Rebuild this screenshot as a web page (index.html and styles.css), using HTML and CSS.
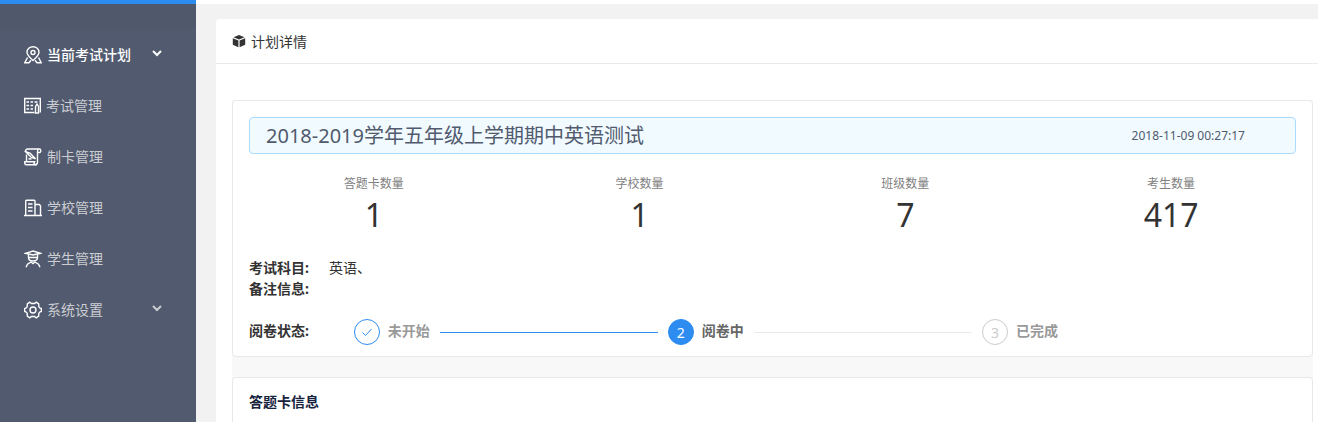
FILE: index.html
```html
<!DOCTYPE html>
<html lang="zh-CN">
<head>
    <meta charset="UTF-8">
    <meta name="viewport" content="width=device-width, initial-scale=1.0">
    <title>计划详情</title>
    <link rel="stylesheet" href="styles.css">
</head>
<body>

    <!-- ======= Sidebar ======= -->
    <aside class="sidebar">
        <nav class="menu">
            <a class="menu-item active" href="#plan">
                <svg class="menu-icon" viewBox="0 0 18 18">
                    <path d="M9 14.500C5 11 3 9 3 6.300a6 5.600 0 0 1 12 0c0 2.700-2 4.700-6 8.200z"/>
                    <circle cx="9" cy="6.500" r="2"/>
                    <path d="M3.500 11.500L.8 16.800H5l2-2.500M14.500 11.500l2.700 5.300H13l-2-2.500"/>
                </svg>
                <span>当前考试计划</span>
                <svg class="arrow" viewBox="0 0 10 10"><path d="M1 3l4 4 4-4"/></svg>
            </a>
            <a class="menu-item" href="#exam">
                <svg class="menu-icon narrow" viewBox="0 0 17 18">
                    <path d="M10.500 15.500H.7v-14h15.600v14"/>
                    <path d="M2.500 5h2.500M6.500 5h2.500M10.500 5h3M2.500 8.500h2.500M6.500 8.500h2.500M2.500 12h2.500M6.500 12h2.500"/>
                    <path d="M11.500 16V9.500l1.500-2.500 1.500 2.500V16z"/>
                </svg>
                <span>考试管理</span>
            </a>
            <a class="menu-item" href="#card">
                <svg class="menu-icon" viewBox="0 0 18 18">
                    <path d="M2.500 4C1 3.500 1.500 1 3.500 1h11.800c2 0 2 3.500.2 3.500h-2M14.500 1.200c-1 .6-1 1.800-1 3V14c0 1.800-1 2.700-2.500 2.700"/>
                    <path d="M2.500 6.500v7M.8 13.800h9.700c-.6 1-.5 2.200.5 2.900H2C.8 16.700.6 15 .8 13.800z"/>
                    <path d="M2 4l4 1.200 5.500 5.600-4.500-1.600zM4.500 10.800l3 .2"/>
                </svg>
                <span>制卡管理</span>
            </a>
            <a class="menu-item" href="#school">
                <svg class="menu-icon" viewBox="0 0 18 18">
                    <path d="M0 16.500h18M1.700 16.500V2a.8.8 0 0 1 .8-.8h7.700a.8.8 0 0 1 .8.800v14.500M11 5.500h4.200l1.300 1.200v9.800"/>
                    <path d="M4 5h4.500M4 8.500h4.500M4 12h4.500"/>
                </svg>
                <span>学校管理</span>
            </a>
            <a class="menu-item" href="#student">
                <svg class="menu-icon" viewBox="0 0 18 18">
                    <path d="M1.500 3.300L9 1l7.500 2.300L9 5z"/>
                    <path d="M4.500 4.500v3.300c0 2 2 3.200 4.500 3.200s4.500-1.200 4.500-3.200V4.500M4.500 7.500h9"/>
                    <path d="M2 17.200l1.500-3L7 12l2 1.500 2-1.500 3.500 2.200 1.500 3"/>
                </svg>
                <span>学生管理</span>
            </a>
            <a class="menu-item" href="#setting">
                <svg class="menu-icon" viewBox="0 0 18 18">
                    <path d="M5.800 1.200L7.500 2.500h3l1.700-1.300 2.500 1.600.1 2.700.8 1.300 1.700.7v3l-1.700.7-.8 1.300-.1 2.700-2.500 1.600-1.700-1.300h-3l-1.700 1.300-2.500-1.600-.1-2.700-.8-1.300-1.700-.7v-3l1.700-.7.8-1.300.1-2.700z"/>
                    <circle cx="9" cy="9" r="3"/>
                </svg>
                <span>系统设置</span>
                <svg class="arrow" viewBox="0 0 10 10"><path d="M1 3l4 4 4-4"/></svg>
            </a>
        </nav>
    </aside>

    <!-- ======= Main Content ======= -->
    <main class="content">
        <section class="panel">
            <header class="panel-head">
                <svg class="cube" viewBox="0 0 14 14">
                    <path d="M7 1l5.500 2.200L7 5.500 1.500 3.200z"/>
                    <path d="M.8 4.200l5.600 2.300v6.700L.8 10.700z"/>
                    <path d="M13.200 4.200L7.600 6.500v6.700l5.600-2.500z"/>
                </svg>
                <h1>计划详情</h1>
            </header>

            <div class="panel-body">
                <div class="card">
                    <div class="plan-title">
                        <h2>2018-2019学年五年级上学期期中英语测试</h2>
                        <time>2018-11-09 00:27:17</time>
                    </div>

                    <div class="stats">
                        <div class="stat"><p>答题卡数量</p><strong>1</strong></div>
                        <div class="stat"><p>学校数量</p><strong>1</strong></div>
                        <div class="stat"><p>班级数量</p><strong>7</strong></div>
                        <div class="stat"><p>考生数量</p><strong>417</strong></div>
                    </div>

                    <dl class="info">
                        <dt>考试科目:</dt><dd>英语、</dd>
                        <dt>备注信息:</dt><dd></dd>
                    </dl>

                    <div class="status">
                        <span class="status-label">阅卷状态:</span>
                        <ol class="steps">
                            <li class="step finish">
                                <span class="step-head"><svg viewBox="0 0 12 12"><path d="M1.500 6.500l3 3 6-6.500"/></svg></span>
                                <span class="step-title">未开始</span>
                            </li>
                            <li class="step process">
                                <span class="step-head">2</span>
                                <span class="step-title">阅卷中</span>
                            </li>
                            <li class="step">
                                <span class="step-head">3</span>
                                <span class="step-title">已完成</span>
                            </li>
                        </ol>
                    </div>
                </div>

                <div class="card">
                    <h3>答题卡信息</h3>
                </div>
            </div>
        </section>
    </main>
</body>
</html>
```
FILE: styles.css
```css
* {
    box-sizing: border-box;
    margin: 0;
    padding: 0;
}

body {
    display: flex;
    min-height: 100vh;
    font-family: "Noto Sans", "Noto Sans CJK SC", sans-serif;
    font-size: 14px;
    line-height: 21px;
    color: #333;
    background-color: #f2f2f2;
}

/* Sidebar */
.sidebar {
    flex: 0 0 196px;
    padding-top: 24px;
    border-top: 4px solid #2d8cf0;
    background-color: #50596b;
}

.menu {
    height: 100%;
    background-color: #515a6e;
}

.menu-item {
    display: flex;
    align-items: center;
    gap: 5px;
    height: 51px;
    padding: 2px 34px 0 24px;
    color: #cbcdd2;
    text-decoration: none;
}

.menu-item.active {
    color: #fff;
    font-weight: 500;
}

.menu-icon {
    width: 18px;
    height: 18px;
    fill: none;
    stroke: #fff;
    stroke-width: 1.4;
}

.menu-icon.narrow {
    width: 17px;
}

.arrow {
    width: 10px;
    height: 10px;
    margin: 0 0 4px auto;
    fill: none;
    stroke: currentColor;
    stroke-width: 2;
}

/* Panel */
.content {
    display: flex;
    flex: 1;
    min-width: 0;
    padding: 15px 0 0 20px;
    border-top: 4px solid #fff;
}

.panel {
    display: flex;
    flex: 1;
    flex-direction: column;
    background-color: #fff;
    border-radius: 4px 0 0 0;
}

.panel-head {
    display: flex;
    align-items: center;
    gap: 5px;
    height: 45px;
    padding: 0 16px;
    border-bottom: 1px solid #e8eaec;
}

.panel-head h1 {
    font-size: 14px;
    font-weight: normal;
}

.cube {
    width: 14px;
    height: 14px;
    fill: #333;
}

.panel-body {
    display: flex;
    flex: 1;
    flex-direction: column;
    gap: 20px;
    margin: 36px 5px 0 16px;
    background-color: #f8f8f8;
}

.card {
    padding: 16px;
    border: 1px solid #e8e8e8;
    border-radius: 4px;
    background-color: #fff;
}

.card:first-child {
    padding-bottom: 11px;
}

.card:last-child {
    flex: 1;
    padding-bottom: 8px;
    border-bottom: none;
    border-radius: 4px 4px 0 0;
}

.card h3 {
    font-size: 14px;
    line-height: 16px;
    color: #17233d;
}

.plan-title {
    display: flex;
    align-items: center;
    justify-content: space-between;
    height: 37px;
    padding: 0 50px 0 16px;
    border: 1px solid #abdcff;
    border-radius: 4px;
    background-color: #f0faff;
    color: #515a6e;
}

.plan-title h2 {
    font-size: 20px;
    font-weight: normal;
}

.plan-title time {
    font-size: 12px;
}

/* Stats */
.stats {
    display: grid;
    grid-template-columns: repeat(4, 1fr);
    gap: 16px;
    margin-top: 19px;
    text-align: center;
}

.stat p {
    font-size: 12px;
    color: #808080;
}

.stat strong {
    display: block;
    font-size: 32px;
    font-weight: normal;
    line-height: 42px;
}

.info {
    display: grid;
    grid-template-columns: 80px 1fr;
    grid-auto-rows: 21px;
    margin-top: 21px;
}

.info dt,
.status-label {
    font-weight: bold;
}

/* Steps */
.status {
    display: flex;
    align-items: center;
    margin-top: 20px;
}

.status-label {
    flex: 0 0 10%;
    padding-bottom: 4px;
}

.steps {
    display: flex;
    flex: 1;
    list-style: none;
}

.step {
    display: flex;
    flex: 1;
    align-items: center;
    gap: 8px;
}

.step:not(:last-child)::after {
    content: "";
    flex: 1;
    height: 1px;
    margin: 0 10px 0 2px;
    background-color: #e8eaec;
}

.step.finish::after {
    background-color: #2d8cf0;
}

.step-head {
    display: flex;
    align-items: center;
    justify-content: center;
    width: 26px;
    height: 26px;
    border: 1px solid #ccc;
    border-radius: 50%;
    color: #ccc;
}

.step-head svg {
    width: 12px;
    height: 12px;
    fill: none;
    stroke: #2d8cf0;
}

.step-title {
    padding-bottom: 4px;
    font-weight: bold;
    color: #999;
}

.finish .step-head {
    border-color: #2d8cf0;
}

.process .step-head {
    border-color: #2d8cf0;
    background-color: #2d8cf0;
    color: #fff;
}

.process .step-title {
    color: #666;
}
```
